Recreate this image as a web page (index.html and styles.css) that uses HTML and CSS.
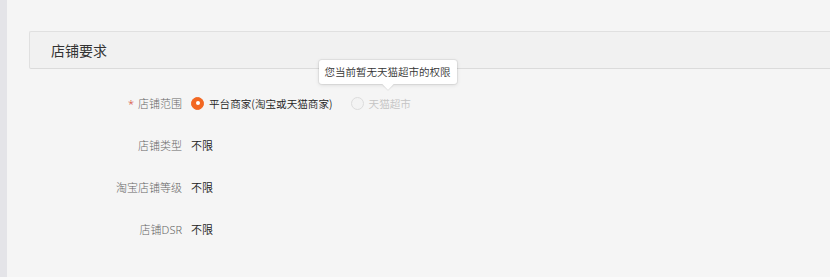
FILE: index.html
```html
<!DOCTYPE html>
<html lang="zh-CN">
<head>
<meta charset="utf-8">
<title>店铺要求</title>
<link rel="stylesheet" href="styles.css">
</head>
<body>
<div class="page">
  <div class="side"></div>
  <div class="main">
    <div class="section-head">店铺要求</div>
    <div class="form">
      <div class="row">
        <div class="label"><span class="req">*</span>店铺范围</div>
        <div class="value options">
          <div class="option">
            <span class="radio checked"></span>
            <span class="opt-text">平台商家(淘宝或天猫商家)</span>
          </div>
          <div class="option disabled">
            <span class="radio"></span>
            <span class="opt-text">天猫超市</span>
            <div class="tooltip">您当前暂无天猫超市的权限<span class="arrow"></span></div>
          </div>
        </div>
      </div>
      <div class="row">
        <div class="label">店铺类型</div>
        <div class="value">不限</div>
      </div>
      <div class="row">
        <div class="label">淘宝店铺等级</div>
        <div class="value">不限</div>
      </div>
      <div class="row">
        <div class="label">店铺DSR</div>
        <div class="value">不限</div>
      </div>
    </div>
  </div>
</div>
</body>
</html>
```
FILE: styles.css
```css
* { box-sizing: border-box; }

body {
  margin: 0;
  background: #fafafa;
  font-family: "Noto Sans", "Noto Sans CJK SC", sans-serif;
  font-weight: 300;
  color: #333;
}

.page {
  display: flex;
  height: 277px;
  background: #f5f5f5;
  overflow: hidden;
}

.side {
  width: 7px;
  flex: none;
  background: #e4e4e8;
}

.main {
  flex: 1;
  padding-top: 31px;
  padding-left: 22px;
}

.section-head {
  height: 38px;
  display: flex;
  align-items: center;
  padding-left: 21px;
  background: #f1f1f1;
  border: 1px solid #e0e0e0;
  border-bottom-color: #dbdbdb;
  border-right: none;
  border-radius: 2px 0 0 2px;
  font-size: 14px;
  font-weight: 400;
  color: #333;
}

.form {
  margin-top: 24px;
  display: flex;
  flex-direction: column;
  gap: 22px;
}

.row {
  display: flex;
  align-items: center;
  height: 20px;
  gap: 9px;
  font-size: 11px;
}

.label {
  width: 153px;
  flex: none;
  text-align: right;
  color: #666;
}

.req {
  color: #d23c2a;
  margin-right: 4px;
}

.value {
  color: #222;
  font-weight: 350;
}

.options {
  display: flex;
  align-items: center;
  gap: 18px;
}

.option {
  position: relative;
  display: flex;
  align-items: center;
  gap: 5px;
}

.opt-text {
  font-family: "Noto Sans CJK SC", sans-serif;
  font-size: 10.6px;
}

.radio {
  width: 13px;
  height: 13px;
  border-radius: 50%;
  border: 1px solid #dcdcdc;
  background: #f3f3f3;
  display: flex;
  align-items: center;
  justify-content: center;
}

.radio.checked {
  border-color: #f26722;
  background: #f26722;
}

.radio.checked::after {
  content: "";
  width: 4px;
  height: 4px;
  border-radius: 50%;
  background: #fff;
}

.disabled .opt-text {
  color: #c4c4c4;
}

.tooltip {
  position: absolute;
  left: -32px;
  bottom: 27px;
  white-space: nowrap;
  height: 24px;
  line-height: 24px;
  padding: 0 6px;
  background: #fff;
  border-radius: 3px;
  box-shadow: 0 0 0 1px rgba(0, 0, 0, 0.05), 0 1px 4px rgba(0, 0, 0, 0.12);
  font-family: "Noto Sans CJK SC", sans-serif;
  font-size: 10.5px;
  font-weight: 350;
  color: #333;
}

.arrow {
  position: absolute;
  left: 50%;
  bottom: -4px;
  width: 8px;
  height: 8px;
  margin-left: -4px;
  background: #fff;
  transform: rotate(45deg);
  box-shadow: 1px 1px 1px rgba(0, 0, 0, 0.07);
}
```
